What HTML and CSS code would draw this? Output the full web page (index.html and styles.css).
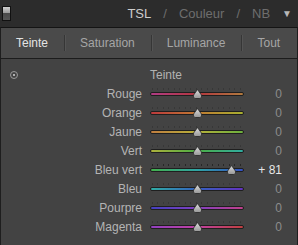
FILE: index.html
```html
<!DOCTYPE html>
<html lang="fr">
<head>
  <meta charset="UTF-8" />
  <title>TSL / Couleur / NB</title>
  <link rel="stylesheet" href="styles.css">
</head>
<body>
  <div class="topbar">
    <span class="toggle"></span>
    <span class="mode active">TSL</span>
    <span class="slash">/</span>
    <span class="mode">Couleur</span>
    <span class="slash">/</span>
    <span class="mode">NB</span>
    <span class="arrow">&#9660;</span>
  </div>

  <div class="tabs">
    <span class="tab active">Teinte</span>
    <span class="tab">Saturation</span>
    <span class="tab">Luminance</span>
    <span class="tab">Tout</span>
  </div>

  <div class="panel">
    <div class="panelHead">
      <span class="target"></span>
      <span class="headTitle">Teinte</span>
    </div>
    <div id="rows"></div>
  </div>

  <script>
    const rows = [
      { name: 'Rouge', value: 0, colors: ['#b03c84', '#b4363e', '#b07a3e'] },
      { name: 'Orange', value: 0, colors: ['#bc3a3c', '#c07a32', '#a8b030'] },
      { name: 'Jaune', value: 0, colors: ['#c07e40', '#b6b03a', '#6cb03e'] },
      { name: 'Vert', value: 0, colors: ['#acb03c', '#4cae44', '#30aca0'] },
      { name: 'Bleu vert', value: 81, colors: ['#44b04c', '#30a4a4', '#3450c4'] },
      { name: 'Bleu', value: 0, colors: ['#30aca4', '#3462c0', '#6432c0'] },
      { name: 'Pourpre', value: 0, colors: ['#4440c0', '#8040c0', '#c0408a'] },
      { name: 'Magenta', value: 0, colors: ['#9240c0', '#c040a2', '#c04040'] }
    ];

    const container = document.getElementById('rows');
    rows.forEach(row => {
      const el = document.createElement('div');
      el.className = 'row' + (row.value !== 0 ? ' changed' : '');
      const left = 5 + (row.value + 100) / 200 * 84 - 5.5;
      const text = row.value > 0 ? '+ ' + row.value : row.value;
      const id = 'g' + row.name.replace(' ', '');
      el.innerHTML = `
        <span class="label">${row.name}</span>
        <span class="slider">
          <span class="ticks"></span>
          <span class="track" style="background: linear-gradient(90deg, ${row.colors.join(', ')});"></span>
          <svg class="thumb" style="left: ${left}px;" width="11" height="10" viewBox="0 0 11 10">
            <defs>
              <linearGradient id="${id}" x1="0" y1="0" x2="0" y2="1">
                <stop offset="0" stop-color="#dedede"/>
                <stop offset="1" stop-color="#969696"/>
              </linearGradient>
            </defs>
            <path d="M5.5 0.5 L9.4 6 Q10.6 9.2 7.8 9.5 L3.2 9.5 Q0.4 9.2 1.6 6 Z" fill="url(#${id})" stroke="#262626" stroke-width="0.8"/>
          </svg>
        </span>
        <span class="value">${text}</span>
      `;
      container.appendChild(el);
    });
  </script>
</body>
</html>
```

FILE: styles.css
```css
body {
  margin: 0;
  width: 298px;
  height: 245px;
  background-color: #2c2c2c;
  font-family: "Liberation Sans", Arial, sans-serif;
  overflow: hidden;
}

.topbar {
  display: flex;
  align-items: center;
  gap: 12px;
  height: 27px;
  padding: 0 6px 0 2px;
  font-size: 13px;
  color: #6e6e6e;
}

.toggle {
  width: 7px;
  height: 13px;
  margin-right: auto;
  border: 1px solid #111;
  background: linear-gradient(#d0d0d0, #9a9a9a 45%, #4a4a4a 50%, #555 100%);
}

.mode.active {
  color: #cdcdcd;
}

.arrow {
  font-size: 10px;
  color: #b8b8b8;
}

.tabs {
  display: flex;
  align-items: center;
  height: 30px;
  border-top: 1px solid #141414;
  border-bottom: 1px solid #1c1c1c;
  border-left: 1px solid #1e1e1e;
  border-right: 1px solid #1e1e1e;
  background-color: #4a4a4a;
  font-size: 12px;
  color: #a6a6a6;
}

.tab {
  position: relative;
  padding: 0 16px;
}

.tab:first-child {
  padding-left: 15px;
}

.tab + .tab::before {
  content: "";
  position: absolute;
  left: 0;
  top: -1px;
  bottom: -1px;
  width: 1px;
  background-color: #363636;
  box-shadow: 1px 0 0 #545454;
}

.tab.active {
  color: #e4e4e4;
}

.panel {
  height: 176px;
  padding: 7px 15px 6px 0;
  background-color: #434343;
  border-left: 1px solid #1e1e1e;
  border-right: 1px solid #1e1e1e;
  border-bottom: 1px solid #1e1e1e;
}

.panelHead,
.row {
  display: grid;
  grid-template-columns: 141px 94px 1fr;
  column-gap: 8px;
  align-items: center;
}

.panelHead {
  height: 18px;
  font-size: 12px;
  color: #b2b2b2;
}

.target {
  width: 6px;
  height: 6px;
  margin-left: 9px;
  border: 1px solid #9a9a9a;
  border-radius: 50%;
  position: relative;
}

.target::after {
  content: "";
  position: absolute;
  left: 2px;
  top: 2px;
  width: 2px;
  height: 2px;
  background-color: #b0b0b0;
}

.headTitle {
  grid-column: 2 / 4;
}

.row {
  height: 19px;
  font-size: 12px;
}

.label {
  text-align: right;
  color: #b4b4b4;
}

.slider {
  position: relative;
  height: 19px;
}

.track {
  position: absolute;
  left: 0;
  right: 0;
  top: 8px;
  height: 2px;
  border: 1px solid #1f1f1f;
  border-radius: 2px;
}

.ticks {
  position: absolute;
  left: 2px;
  right: 2px;
  top: 4px;
  height: 2px;
  background: repeating-linear-gradient(90deg, rgba(30, 30, 30, 0.3) 0 1px, transparent 1px 5.5px);
}

.row.changed .ticks {
  background: repeating-linear-gradient(90deg, rgba(20, 20, 20, 0.6) 0 1px, transparent 1px 5.5px);
}

.thumb {
  position: absolute;
  top: 5px;
}

.value {
  text-align: right;
  color: #8c8c8c;
}

.row.changed .value {
  color: #e8e8e8;
}
```
